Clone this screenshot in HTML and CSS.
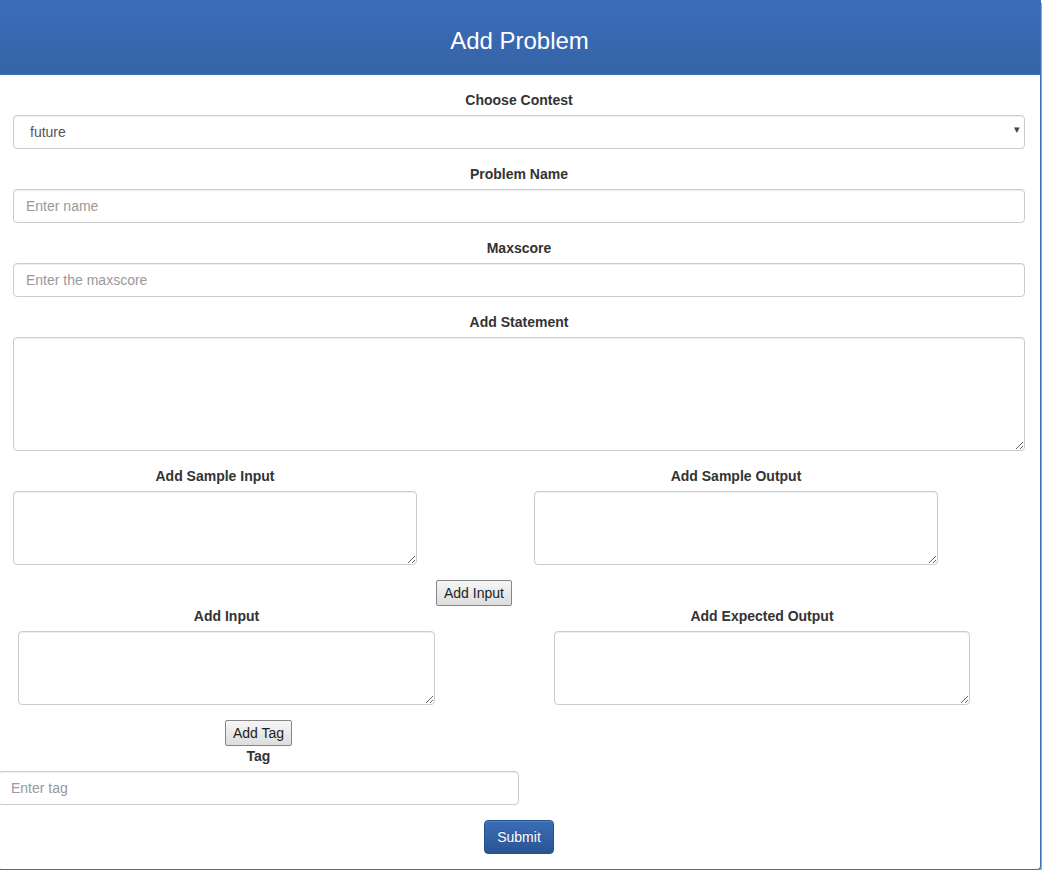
FILE: index.html
```html
<!DOCTYPE html>
<html>
<head>
<meta charset="utf-8">
<title>Add Problem</title>
<link rel="stylesheet" href="styles.css">
</head>
<body>
<div class="panel">
  <div class="panel-heading"><h3 class="panel-title">Add Problem</h3></div>
  <div class="panel-body">
    <div class="group">
      <label class="lbl">Choose Contest</label>
      <div class="select-wrap">
        <select class="control select"><option>future</option></select>
      </div>
    </div>
    <div class="group">
      <label class="lbl">Problem Name</label>
      <input class="control" type="text" placeholder="Enter name">
    </div>
    <div class="group">
      <label class="lbl">Maxscore</label>
      <input class="control" type="text" placeholder="Enter the maxscore">
    </div>
    <div class="group">
      <label class="lbl">Add Statement</label>
      <textarea class="control area-big"></textarea>
    </div>
    <div class="pair pair-sample">
      <div class="col col-s1">
        <label class="lbl">Add Sample Input</label>
        <textarea class="control area-small"></textarea>
      </div>
      <div class="col col-s2">
        <label class="lbl">Add Sample Output</label>
        <textarea class="control area-small"></textarea>
      </div>
    </div>
    <div class="add-input-row"><button class="native-btn">Add Input</button></div>
    <div class="pair pair-io">
      <div class="col col-i1">
        <label class="lbl">Add Input</label>
        <textarea class="control area-small"></textarea>
      </div>
      <div class="col col-i2">
        <label class="lbl">Add Expected Output</label>
        <textarea class="control area-small"></textarea>
      </div>
    </div>
    <div class="tag-col">
      <button class="native-btn">Add Tag</button>
      <label class="lbl">Tag</label>
      <input class="control" type="text" placeholder="Enter tag">
    </div>
    <div class="submit-row"><button class="submit">Submit</button></div>
  </div>
</div>
</body>
</html>
```
FILE: styles.css
```css
html, body {
  margin: 0;
  padding: 0;
  background: #ffffff;
  overflow: hidden;
}
body {
  font-family: "Liberation Sans", Arial, sans-serif;
  font-size: 14px;
  color: #333333;
}
.panel {
  width: 1043px;
  margin-left: -2px;
  box-sizing: border-box;
  border: 1px solid #3a6fba;
  border-top: none;
  border-radius: 0 0 4px 4px;
  background: #ffffff;
  box-shadow: 1px 3px 0 #8eaad3;
}
.panel-heading {
  background: linear-gradient(to bottom, #3b6dba 0%, #3563a6 100%);
  padding: 27px 15px 20px;
  border-bottom: 1px solid #3b70bd;
  text-align: center;
}
.panel-title {
  margin: 0;
  font-size: 24px;
  line-height: 27px;
  font-weight: normal;
  color: #ffffff;
}
.panel-body {
  padding: 15px 15px 15px 14px;
}
.group {
  margin-bottom: 15px;
}
.lbl {
  display: block;
  text-align: center;
  font-weight: bold;
  line-height: 20px;
  margin-bottom: 5px;
  color: #333333;
}
.control {
  display: block;
  width: 100%;
  box-sizing: border-box;
  height: 34px;
  padding: 6px 12px;
  font-family: "Liberation Sans", Arial, sans-serif;
  font-size: 14px;
  line-height: 20px;
  color: #555555;
  background: #ffffff;
  border: 1px solid #cccccc;
  border-radius: 4px;
  box-shadow: inset 0 1px 1px rgba(0,0,0,0.075);
  margin: 0;
}
.control::placeholder {
  color: #999999;
}
.select-wrap {
  position: relative;
}
.select {
  -webkit-appearance: none;
  appearance: none;
  padding-left: 16px;
}
.select-wrap::after {
  content: "\25BE";
  position: absolute;
  right: 5px;
  top: 8px;
  font-size: 11px;
  color: #444444;
  pointer-events: none;
}
.area-big {
  height: 114px;
  resize: vertical;
}
.area-small {
  height: 74px;
}
.pair {
  display: flex;
}
.pair-sample {
  gap: 117px;
}
.col-s1, .col-s2 {
  width: 404px;
}
.add-input-row {
  padding-left: 423px;
  margin-top: 15px;
}
.native-btn {
  display: block;
  font-family: "Liberation Sans", Arial, sans-serif;
  font-size: 14px;
  line-height: 16px;
  padding: 4px 7px;
  color: #222222;
  background: linear-gradient(to bottom, #f6f6f6 0%, #dddddd 100%);
  border: 1px solid #858585;
  border-radius: 2px;
  margin: 0;
}
.pair-io {
  gap: 119px;
  padding-left: 5px;
}
.col-i1 {
  width: 417px;
}
.col-i2 {
  width: 416px;
}
.tag-col {
  width: 521px;
  margin-left: -15px;
  margin-top: 15px;
  display: flex;
  flex-direction: column;
  align-items: center;
}
.tag-col .control {
  width: 100%;
}
.submit-row {
  margin-top: 15px;
  display: flex;
  justify-content: center;
}
.submit {
  height: 34px;
  padding: 6px 12px;
  font-family: "Liberation Sans", Arial, sans-serif;
  font-size: 14px;
  line-height: 20px;
  color: #ffffff;
  background: linear-gradient(to bottom, #3a6db8 0%, #2b5592 100%);
  border: 1px solid #274f8a;
  border-radius: 4px;
  text-shadow: 0 -1px 0 rgba(0,0,0,0.2);
  box-shadow: inset 0 1px 0 rgba(255,255,255,0.15);
}
```
